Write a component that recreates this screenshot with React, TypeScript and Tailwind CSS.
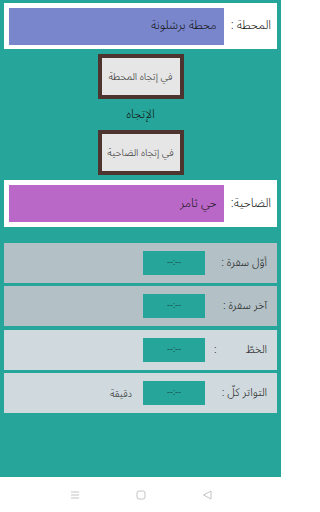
import React from "react";

const font = { fontFamily: '"Noto Sans Arabic", "Noto Naskh Arabic", "Droid Arabic Naskh", "DejaVu Sans", "Noto Sans", sans-serif' };

function Row({ label, bg, extra, split }: { label: string; bg: string; extra?: string; split?: boolean }) {
  return (
    <div className={`flex items-center h-[40px] pr-[10px] ${bg}`}>
      <div className="w-[62px] shrink-0 flex items-center text-[11px] text-[#111] whitespace-nowrap">
        {split ? (
          <div className="flex w-full justify-between pl-[9px]">
            <span>الخطّ</span>
            <span>:</span>
          </div>
        ) : (
          <span>{label}</span>
        )}
      </div>
      <div className="w-[62px] h-[24px] bg-[#26a69a] flex items-center justify-center text-[9px] text-[#111]" dir="ltr">
        --:--
      </div>
      {extra && <span className="mr-[11px] text-[10px] text-[#111]">{extra}</span>}
    </div>
  );
}

export default function App() {
  return (
    <div className="w-[281px] h-[512px] flex flex-col font-light" style={font} dir="rtl">
      <div className="h-[477px] bg-[#26a69a] flex flex-col px-[4px] pt-[3px]">
        <div className="bg-white h-[46px] flex items-center pr-[6px] pl-[5px] gap-[7px]">
          <span className="text-[12px] text-[#111] whitespace-nowrap">المحطة :</span>
          <div className="flex-1 h-[37px] bg-[#7986cb] flex items-center pr-[7px] text-[12px] text-[#111]">
            محطة برشلونة
          </div>
        </div>
        <div className="flex flex-col items-center">
          <button className="mt-[5px] w-[86px] h-[45px] border-[4px] border-[#4e342e] bg-[#e6e6e6] text-[10px] text-[#222] flex items-center justify-center">
            في إتجاه المحطة
          </button>
          <div className="h-[31px] flex items-center text-[12px] text-[#111]">الإتجاه</div>
          <button className="w-[86px] h-[45px] border-[4px] border-[#4e342e] bg-[#e6e6e6] text-[10px] text-[#222] flex items-center justify-center">
            في إتجاه الضاحية
          </button>
        </div>
        <div className="mt-[5px] bg-white h-[47px] flex items-center pr-[6px] pl-[5px] gap-[7px]">
          <span className="text-[12px] text-[#111] whitespace-nowrap">الضاحية:</span>
          <div className="flex-1 h-[37px] bg-[#ba68c8] flex items-center pr-[7px] text-[12px] text-[#111]">
            حي ثامر
          </div>
        </div>
        <div className="mt-[16px] flex flex-col">
          <Row label="أوّل سفرة :" bg="bg-[#b3c0c6]" />
          <div className="h-[3px]" />
          <Row label="آخر سفرة :" bg="bg-[#b3c0c6]" />
          <div className="h-[4px]" />
          <Row label="" split bg="bg-[#d0d9dd]" />
          <div className="h-[3px]" />
          <Row label="التواتر كلّ :" bg="bg-[#d0d9dd]" extra="دقيقة" />
        </div>
      </div>
      <div className="flex-1 bg-white flex items-center justify-center" dir="ltr">
        <div className="flex items-center justify-between w-[142px]">
          <svg width="10" height="10" viewBox="0 0 10 10" fill="none" stroke="#c4c4c4" strokeWidth="1">
            <path d="M1 2h8M1 5h8M1 8h8" />
          </svg>
          <svg width="10" height="10" viewBox="0 0 10 10" fill="none" stroke="#c4c4c4" strokeWidth="1">
            <rect x="1" y="1" width="8" height="8" rx="2" />
          </svg>
          <svg width="10" height="10" viewBox="0 0 10 10" fill="none" stroke="#c4c4c4" strokeWidth="1">
            <path d="M9 1L1.5 5L9 9Z" strokeLinejoin="round" />
          </svg>
        </div>
      </div>
    </div>
  );
}
